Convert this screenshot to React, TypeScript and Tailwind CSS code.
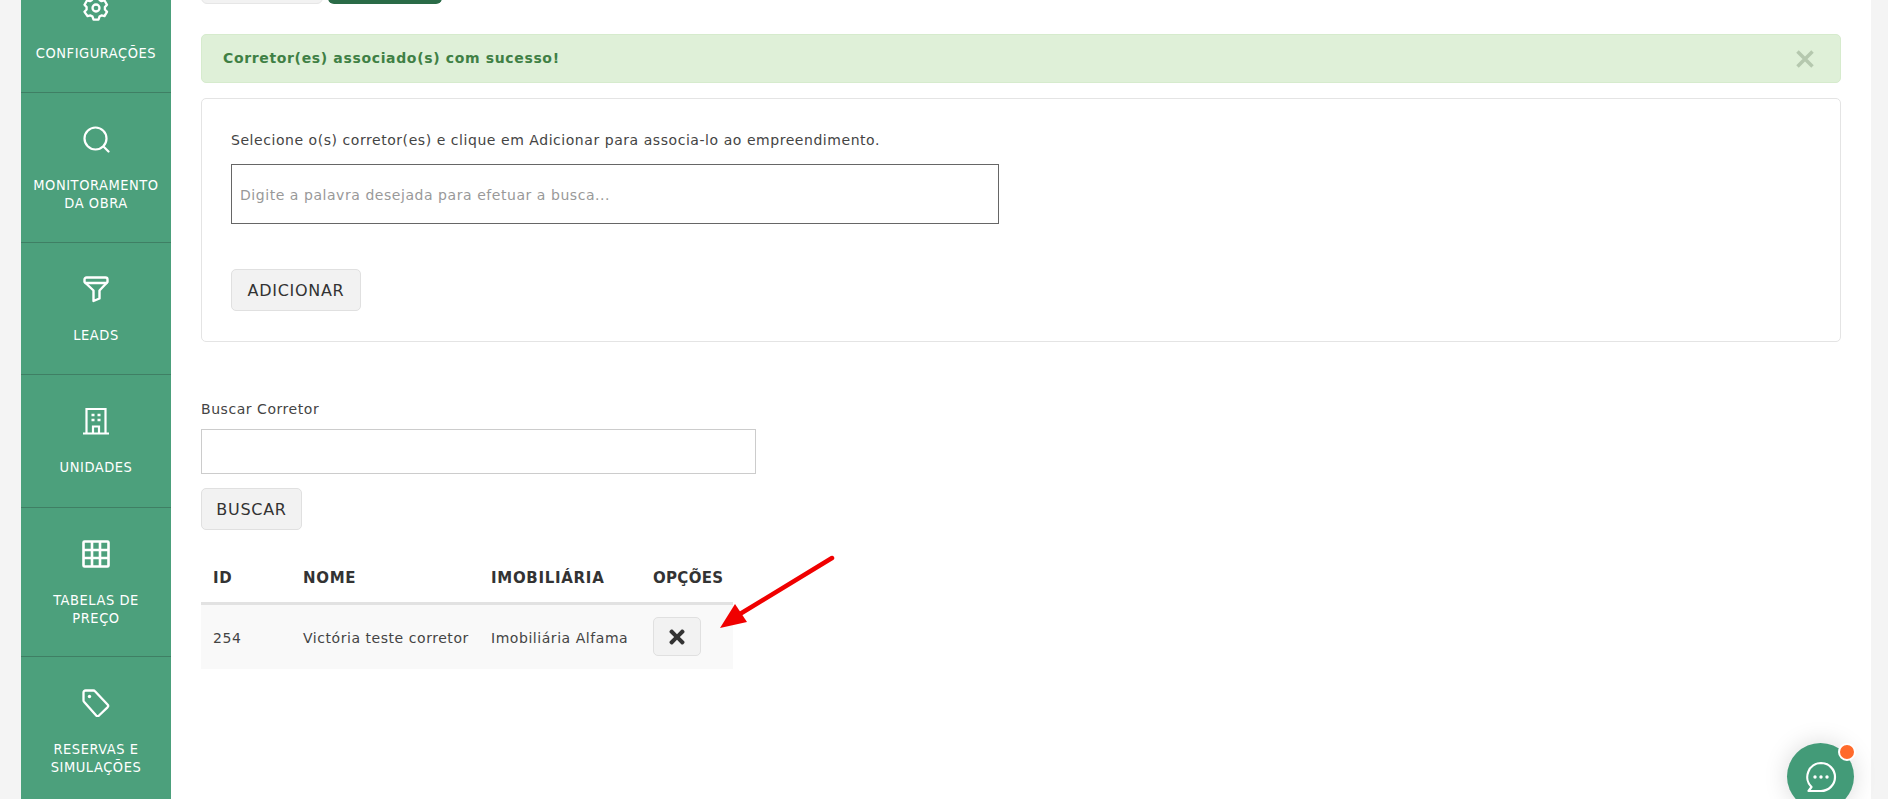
import { ReactNode } from "react";
import { FaTimes } from "react-icons/fa";

const GearIcon = () => (
  <svg className="-mt-[6px]" width="28" height="28" viewBox="0 0 28 28" fill="none" stroke="white" strokeWidth="2.300" strokeLinejoin="round">
    <path d="M11.500 3h5l1 3 2 1.200 3-.7 2.500 4.300-2.100 2.300v2.400l2.100 2.300-2.500 4.300-3-.7-2 1.200-1 3h-5l-1-3-2-1.200-3 .7L2.500 17.800l2.100-2.300v-2.400L2.500 10.800 5 6.500l3 .7 2-1.200z" />
    <circle cx="14" cy="14" r="3.500" />
  </svg>
);

const SearchIcon = () => (
  <svg width="28" height="28" viewBox="0 0 28 28" fill="none" stroke="white" strokeWidth="2.200" strokeLinecap="round">
    <circle cx="13.500" cy="13.500" r="11" />
    <path d="M22 22l4.500 4.500" />
  </svg>
);

const FunnelIcon = () => (
  <svg width="28" height="28" viewBox="0 0 28 28" fill="none" stroke="white" strokeWidth="2.400" strokeLinejoin="round" strokeLinecap="round">
    <path d="M2.500 4.500a2 2 0 0 1 2-2h19a2 2 0 0 1 2 2v2.500l-8 8.500v8l-6 2.500V15.500L2.500 7z" />
    <path d="M3.500 8h21" />
  </svg>
);

const BuildingIcon = () => (
  <svg width="28" height="28" viewBox="0 0 28 28" fill="none" stroke="white" strokeWidth="2.200">
    <path d="M1 26.500h26M4.500 26.500V2h19v24.500" />
    <path d="M11 26.500v-7h6v7" />
    <path d="M9.500 8h3M15.500 8h3M9.500 13h3M15.500 13h3" strokeWidth="2.500" />
  </svg>
);

const GridIcon = () => (
  <svg width="28" height="28" viewBox="0 0 28 28" fill="none" stroke="white" strokeWidth="2.600">
    <rect x="1.500" y="1.500" width="25" height="25" rx="1" />
    <path d="M10 1.500v25M18 1.500v25M1.500 10h25M1.500 18h25" />
  </svg>
);

const TagIcon = () => (
  <svg width="28" height="28" viewBox="0 0 28 28" fill="none" stroke="white" strokeWidth="2.300" strokeLinejoin="round">
    <path d="M1.500 3.500a2 2 0 0 1 2-2h8a2 2 0 0 1 1.500.7l12.500 13.300a2 2 0 0 1 0 2.800L17 26.500a2 2 0 0 1-2.800 0L2.200 13a2 2 0 0 1-.7-1.500z" />
    <circle cx="7.500" cy="7.500" r="1.700" fill="white" stroke="none" />
  </svg>
);

const MenuItem = ({
  icon,
  lines,
  height,
}: {
  icon: ReactNode;
  lines: string[];
  height: string;
}) => (
  <div className={`flex flex-col items-center border-b border-[#3f7f64] pt-[32px] ${height}`}>
    {icon}
    <div className="mt-[23px] whitespace-nowrap text-center text-[14.5px] leading-[18px] text-white [font-stretch:condensed]">
      {lines.map((line) => (
        <div key={line}>{line}</div>
      ))}
    </div>
  </div>
);

const Sidebar = () => (
  <nav className="w-[150px] shrink-0 bg-[#4ca07c] font-['DejaVu_Sans',sans-serif]">
    <div className="flex h-[93px] flex-col items-center border-b border-[#3f7f64]">
      <GearIcon />
      <div className="mt-[22px] whitespace-nowrap text-center text-[14.5px] leading-[18px] text-white [font-stretch:condensed]">CONFIGURAÇÕES</div>
    </div>
    <MenuItem icon={<SearchIcon />} lines={["MONITORAMENTO", "DA OBRA"]} height="h-[150px]" />
    <MenuItem icon={<FunnelIcon />} lines={["LEADS"]} height="h-[132px]" />
    <MenuItem icon={<BuildingIcon />} lines={["UNIDADES"]} height="h-[133px]" />
    <MenuItem icon={<GridIcon />} lines={["TABELAS DE", "PREÇO"]} height="h-[149px]" />
    <MenuItem icon={<TagIcon />} lines={["RESERVAS E", "SIMULAÇÕES"]} height="h-[149px]" />
  </nav>
);

const GrayButton = ({ children, width }: { children: ReactNode; width: string }) => (
  <button className={`flex h-[42px] items-center justify-center rounded-[5px] border border-[#e0e0e0] bg-[#f2f2f2] pt-[2px] text-[16px] tracking-[0.7px] text-[#333] ${width}`}>
    {children}
  </button>
);

const Arrow = () => (
  <svg className="absolute left-[715px] top-[553px]" width="125" height="80" viewBox="0 0 125 80" fill="none">
    <path d="M117 5L20 64" stroke="#f00000" strokeWidth="4.500" strokeLinecap="round" />
    <path d="M5 75L20 51L32 69z" fill="#f00000" />
  </svg>
);

export default function App() {
  return (
    <div className="relative flex h-[799px] w-[1888px] overflow-hidden bg-[#f4f4f4] pl-[21px] pr-[17px] font-['DejaVu_Sans',sans-serif] text-[14px] tracking-[0.55px] text-[#444]">
      <Sidebar />
      <main className="flex-1 bg-white pl-[30px] pr-[30px]">
        <div className="flex gap-[5px] -mt-[30px]">
          <div className="h-[34px] w-[122px] rounded-[6px] border border-[#e6e6e6] bg-[#f2f2f2]" />
          <div className="h-[34px] w-[114px] rounded-[6px] bg-[#2a6b47]" />
        </div>

        <div className="mt-[30px] flex h-[49px] items-center justify-between rounded-[5px] border border-[#d6ebcd] bg-[#dff0d8] pl-[21px] pr-[26px]">
          <span className="font-bold tracking-[0.65px] text-[#3f8045]">Corretor(es) associado(s) com sucesso!</span>
          <svg width="18" height="18" viewBox="0 0 18 18" stroke="#b5c8ae" strokeWidth="3.500">
            <path d="M1.500 1.500l15 15M16.500 1.500l-15 15" />
          </svg>
        </div>

        <section className="mt-[15px] h-[244px] rounded-[5px] border border-[#e4e4e4] px-[29px] pt-[31px]">
          <p className="leading-[20px]">Selecione o(s) corretor(es) e clique em Adicionar para associa-lo ao empreendimento.</p>
          <input
            className="mt-[14px] block h-[60px] w-[768px] border border-[#666] px-[8px] pt-[2px] placeholder:text-[#999]"
            placeholder="Digite a palavra desejada para efetuar a busca..."
          />
          <div className="mt-[45px]">
            <GrayButton width="w-[130px]">ADICIONAR</GrayButton>
          </div>
        </section>

        <label className="mt-[57px] block leading-[20px]">Buscar Corretor</label>
        <input className="mt-[10px] block h-[45px] w-[555px] border border-[#ccc]" />
        <div className="mt-[14px]">
          <GrayButton width="w-[101px]">BUSCAR</GrayButton>
        </div>

        <table className="mt-[24px] w-[532px] border-collapse text-left">
          <thead>
            <tr className="h-[49px] border-b-[3px] border-[#e2e2e2] text-[15px] tracking-[0.7px] text-[#333]">
              <th className="w-[102px] pl-[12px] font-bold">ID</th>
              <th className="w-[188px] font-bold">NOME</th>
              <th className="w-[162px] font-bold">IMOBILIÁRIA</th>
              <th className="font-bold tracking-[0.3px]">OPÇÕES</th>
            </tr>
          </thead>
          <tbody>
            <tr className="h-[66px] bg-[#f9f9f9]">
              <td className="pl-[12px] pt-[3px]">254</td>
              <td className="pt-[3px]">Victória teste corretor</td>
              <td className="pt-[3px]">Imobiliária Alfama</td>
              <td>
                <button className="flex h-[39px] w-[48px] items-center justify-center rounded-[5px] border border-[#e0e0e0] bg-[#f2f2f2] text-[#333]">
                  <FaTimes size={22} />
                </button>
              </td>
            </tr>
          </tbody>
        </table>
      </main>

      <Arrow />

      <div className="absolute left-[1787px] top-[743px] flex h-[67px] w-[67px] items-center justify-center rounded-full bg-[#439b78] shadow-[0_0_24px_rgba(0,0,0,0.15)]">
        <svg width="32" height="32" viewBox="0 0 32 32" fill="none" stroke="white" strokeWidth="2.200" strokeLinejoin="round">
          <path d="M16 2a14 14 0 1 1 0 28H3.500l3-4A14 14 0 0 1 16 2z" />
          <circle cx="10" cy="16" r="1.700" fill="white" stroke="none" />
          <circle cx="16" cy="16" r="1.700" fill="white" stroke="none" />
          <circle cx="22" cy="16" r="1.700" fill="white" stroke="none" />
        </svg>
      </div>
      <div className="absolute left-[1838px] top-[743px] h-[18px] w-[18px] rounded-full border-2 border-white bg-[#ff6a2b]" />
    </div>
  );
}
